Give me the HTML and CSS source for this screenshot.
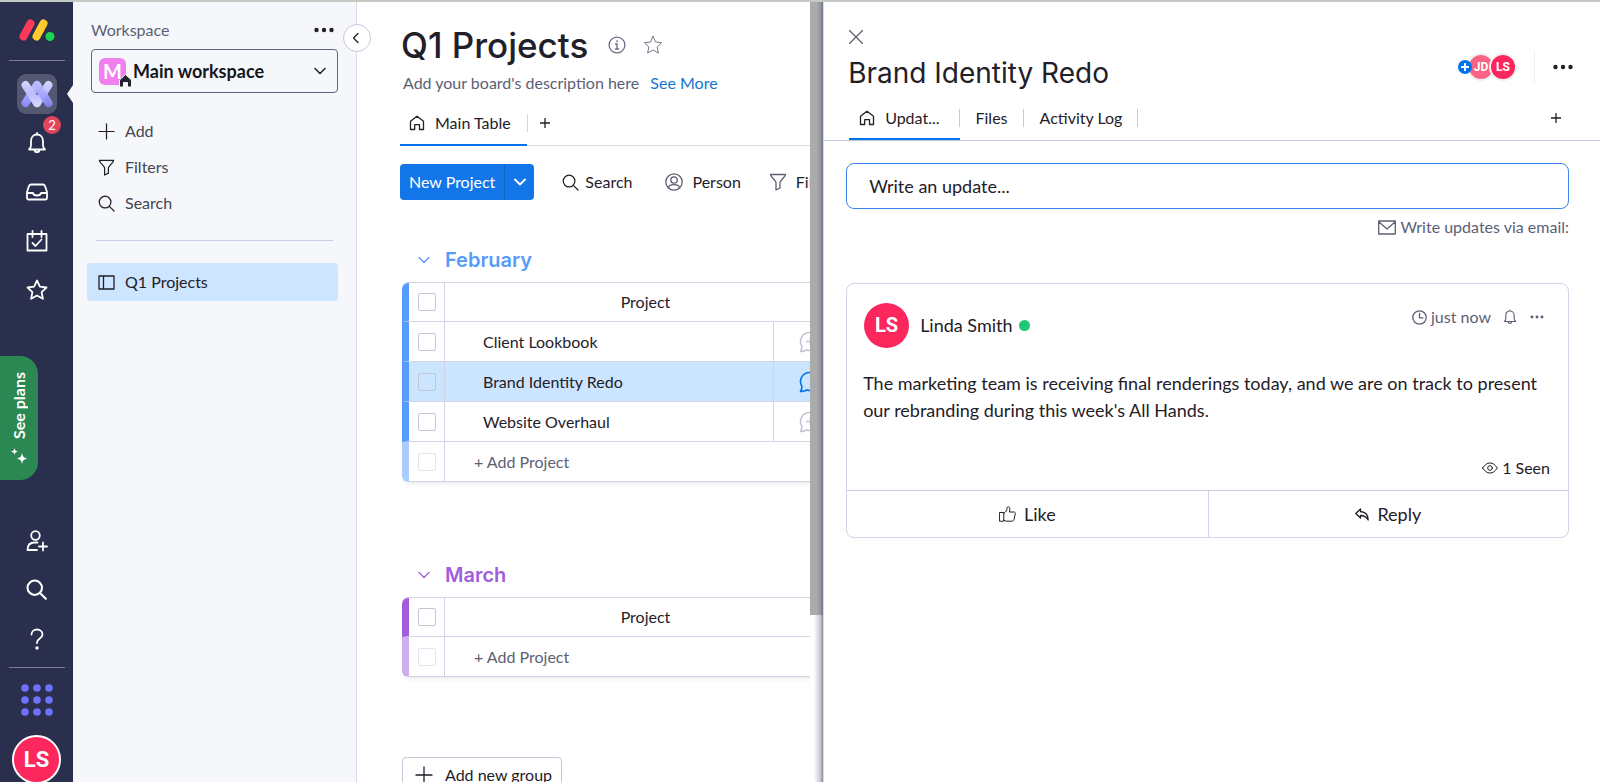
FILE: index.html
```html
<!DOCTYPE html>
<html lang="en">
<head>
    <meta charset="UTF-8">
    <meta name="viewport" content="width=device-width, initial-scale=1.0">
    <title>Q1 Projects</title>
    <link rel="stylesheet" href="styles.css">
</head>
<body>

    <!-- Shared icons -->
    <svg class="icon-defs" aria-hidden="true">
        <defs>
            <linearGradient id="grad-violet" x1="0" y1="0" x2="0" y2="28" gradientUnits="userSpaceOnUse"><stop offset="0.2" stop-color="#b9bbff"/><stop offset="1" stop-color="#8385fb"/></linearGradient>
            <linearGradient id="grad-light" x1="0" y1="0" x2="0" y2="28" gradientUnits="userSpaceOnUse"><stop offset="0" stop-color="#d6d8ff"/><stop offset="0.5" stop-color="#b9bbfd"/><stop offset="1" stop-color="#dcddff"/></linearGradient>
        </defs>
        <symbol id="icon-home" viewBox="0 0 16 16"><path d="M1.500 6.300 8 1.200l6.500 5.100v8.200h-4V9.600H5.700v4.900H1.500z"/></symbol>
        <symbol id="icon-search" viewBox="0 0 18 18"><circle cx="7.500" cy="7.500" r="6.200"/><path d="m12 12 5 5"/></symbol>
        <symbol id="icon-filter" viewBox="0 0 18 18"><path d="M1.500 1.500h15c0 2-5.500 6.500-5.500 8v5.500l-4 2v-7.500c0-1.500-5.500-6-5.500-8z"/></symbol>
        <symbol id="icon-plus" viewBox="0 0 18 18"><path d="M9 1v16M1 9h16"/></symbol>
        <symbol id="icon-chevron" viewBox="0 0 12 12"><path d="m1 3.500 5 5 5-5"/></symbol>
        <symbol id="icon-dots" viewBox="0 0 20 6"><circle cx="2.500" cy="3" r="2.200"/><circle cx="10" cy="3" r="2.200"/><circle cx="17.500" cy="3" r="2.200"/></symbol>
        <symbol id="icon-bell" viewBox="0 0 20 22"><path d="M10 1v1.500M2 17.500h16c-1.500-1.200-2-2.500-2-4.500V9c0-4-2.500-6.500-6-6.500S4 5 4 9v4c0 2-.5 3.300-2 4.500zM7.500 18c.3 1.500 1.200 2.200 2.500 2.200s2.200-.7 2.500-2.200"/></symbol>
        <symbol id="icon-star" viewBox="0 0 22 22"><path d="m11 1.500 2.900 6.200 6.600.8-4.900 4.600 1.300 6.700L11 16.500l-5.900 3.300 1.300-6.700-4.900-4.600 6.600-.8z"/></symbol>
        <symbol id="icon-bubble" viewBox="0 0 22 22"><path d="M11.500 1.500a9 9 0 1 1-3.800 17.200C6.500 20 5.500 20.300 4.500 19.800c-1 .7-2 .9-3 .7 1-1.500 1.500-3 1.300-5.500A9 9 0 0 1 11.500 1.500z"/></symbol>
    </svg>

    <div class="app">

        <!-- Main navigation rail -->
        <nav class="rail" aria-label="Main">
            <a href="#" class="rail-logo" aria-label="Home">
                <svg width="36" height="24" viewBox="0 0 36 24">
                    <path d="M4.500 18.500 11.500 5.500" stroke="#fb3958" stroke-width="8" stroke-linecap="round"/>
                    <path d="M17.500 18.500 24.500 5.500" stroke="#ffcb2f" stroke-width="8" stroke-linecap="round"/>
                    <circle cx="31" cy="18.500" r="4.500" fill="#1fd353"/>
                </svg>
            </a>
            <hr class="rail-line">
            <a href="#" class="rail-item" aria-label="Work management">
                <span class="rail-active">
                    <svg width="32" height="28" viewBox="0 0 32 28" stroke-width="8" stroke-linecap="round">
                        <path d="M27.500 5 16 23" stroke="url(#grad-light)"/>
                        <path d="M16 5 4.500 23" stroke="url(#grad-violet)"/>
                        <path d="m4.500 5 11.500 18" stroke="url(#grad-light)"/>
                        <path d="m16 5 11.500 18" stroke="url(#grad-violet)" opacity=".9"/>
                    </svg>
                </span>
            </a>
            <a href="#" class="rail-item" aria-label="Notifications">
                <svg class="icon" width="20" height="22"><use href="#icon-bell"/></svg>
                <span class="rail-badge">2</span>
            </a>
            <a href="#" class="rail-item" aria-label="Inbox">
                <svg class="icon" width="22" height="18" viewBox="0 0 22 18"><path d="M5 1.500h12c1 0 1.600.5 2 1.500l2 6v6c0 1-.6 1.500-1.500 1.500h-17C1.600 16.500 1 16 1 15V9l2-6c.4-1 1-1.500 2-1.500zM1.500 10H7c.4 2 1.500 2.500 4 2.500s3.600-.5 4-2.500h5.500"/></svg>
            </a>
            <a href="#" class="rail-item" aria-label="My work">
                <svg class="icon" width="22" height="22" viewBox="0 0 22 22"><path d="M1.500 4h19v16.500h-19zM6.500 1v6M15.500 1v6M6.500 13l3 3 6-6.500"/></svg>
            </a>
            <a href="#" class="rail-item" aria-label="Favorites">
                <svg class="icon" width="22" height="22"><use href="#icon-star"/></svg>
            </a>

            <div class="rail-bottom">
                <a href="#" class="rail-item" aria-label="Invite members">
                    <svg class="icon" width="22" height="22" viewBox="0 0 22 22"><circle cx="9.500" cy="5.500" r="4.300"/><path d="M11 20H1.500c0-5 3-7.500 7-7.500h3M17 12.500v8M13 16.500h8"/></svg>
                </a>
                <button type="button" class="rail-item" aria-label="Search">
                    <svg class="icon" width="21" height="21"><use href="#icon-search"/></svg>
                </button>
                <a href="#" class="rail-item" aria-label="Help">
                    <svg class="icon" width="14" height="22" viewBox="0 0 14 22"><path d="M1.500 6.500C1.500 3.500 4 1.500 7 1.500s5.500 2 5.500 5c0 4-5.500 4-5.500 8V15"/><circle cx="7" cy="20" r=".8"/></svg>
                </a>
                <hr class="rail-line rail-line-bottom">
                <button type="button" class="rail-apps" aria-label="Apps">
                    <svg width="32" height="32" viewBox="0 0 32 32" fill="#6f72ff">
                        <circle cx="4" cy="4" r="3.800"/><circle cx="16" cy="4" r="3.800"/><circle cx="28" cy="4" r="3.800"/>
                        <circle cx="4" cy="16" r="3.800"/><circle cx="16" cy="16" r="3.800"/><circle cx="28" cy="16" r="3.800"/>
                        <circle cx="4" cy="28" r="3.800"/><circle cx="16" cy="28" r="3.800"/><circle cx="28" cy="28" r="3.800"/>
                    </svg>
                </button>
                <button type="button" class="avatar rail-avatar">LS</button>
            </div>

            <a href="#" class="see-plans">
                <svg width="17" height="16" viewBox="0 0 17 16" fill="#fff"><path d="M11 5c1 4 1.500 4.500 5.500 5.500-4 1-4.500 1.500-5.500 5.500-1-4-1.500-4.500-5.500-5.500 4-1 4.500-1.500 5.500-5.500zM3.500 0C4.100 2.500 4.500 2.900 7 3.500 4.500 4.100 4.100 4.500 3.500 7 2.900 4.500 2.500 4.100 0 3.500 2.500 2.900 2.900 2.500 3.500 0z"/></svg>
                <span class="see-plans-text">See plans</span>
            </a>
        </nav>

        <!-- Workspace sidebar -->
        <aside class="sidebar">
            <div class="sidebar-head">
                <label for="workspace">Workspace</label>
                <button type="button" aria-label="Workspace options"><svg class="dots" width="20" height="6"><use href="#icon-dots"/></svg></button>
            </div>
            <div class="workspace-box">
                <span class="workspace-icon">M
                    <svg class="workspace-home" width="13" height="13" viewBox="0 0 13 13"><path d="M6.500.5 12.500 6v7H8.500V8.500h-4V13H.5V6z" fill="#23252e" stroke="#f6f7fb"/></svg>
                </span>
                <select id="workspace" class="workspace-select">
                    <option>Main workspace</option>
                </select>
                <svg class="icon workspace-arrow" width="12" height="12"><use href="#icon-chevron"/></svg>
            </div>
            <div class="sidebar-menu">
                <button type="button"><svg class="icon" width="17" height="17"><use href="#icon-plus"/></svg>Add</button>
                <button type="button"><svg class="icon" width="17" height="17"><use href="#icon-filter"/></svg>Filters</button>
                <button type="button"><svg class="icon" width="17" height="17"><use href="#icon-search"/></svg>Search</button>
            </div>
            <hr class="sidebar-line">
            <a href="#" class="board-link">
                <svg class="icon" width="17" height="15" viewBox="0 0 17 15"><path d="M1 1h15v13H1zM5.500 1v13"/></svg>Q1 Projects
            </a>
            <button type="button" class="sidebar-toggle" aria-label="Collapse sidebar">
                <svg class="icon" width="8" height="12" viewBox="0 0 8 12"><path d="M6 1.500 1.500 6 6 10.500"/></svg>
            </button>
        </aside>

        <!-- Board -->
        <main class="board">
            <div class="board-content">
                <div class="board-title">
                    <h1>Q1 Projects</h1>
                    <button type="button" aria-label="Board info">
                        <svg class="icon" width="18" height="18" viewBox="0 0 18 18"><circle cx="9" cy="9" r="7.900"/><path d="M9 8v5M7.500 8H9M7.500 13h3M9 4.700v1"/></svg>
                    </button>
                    <button type="button" aria-label="Add to favorites">
                        <svg class="icon thin" width="20" height="20"><use href="#icon-star"/></svg>
                    </button>
                </div>
                <p class="board-description">Add your board's description here <a href="#">See More</a></p>

                <div class="board-tabs">
                    <a href="#" class="board-tab"><svg class="icon" width="16" height="16"><use href="#icon-home"/></svg>Main Table</a>
                    <button type="button" class="tab-add" aria-label="Add view"><svg class="icon" width="10" height="10" viewBox="0 0 10 10"><path d="M5 0v10M0 5h10"/></svg></button>
                </div>

                <div class="toolbar">
                    <div class="new-project">
                        <button type="button" class="new-project-main">New Project</button>
                        <button type="button" class="new-project-more" aria-label="More options"><svg class="icon" width="12" height="12"><use href="#icon-chevron"/></svg></button>
                    </div>
                    <button type="button" class="tool"><svg class="icon" width="17" height="17"><use href="#icon-search"/></svg>Search</button>
                    <button type="button" class="tool tool-person">
                        <svg class="icon" width="18" height="18" viewBox="0 0 18 18"><circle cx="9" cy="9" r="8.200"/><circle cx="9" cy="7" r="3.200"/><path d="M3.500 15c0-2.500 2.500-3.300 5.500-3.300s5.500.8 5.500 3.300"/></svg>Person
                    </button>
                    <button type="button" class="tool tool-filter"><svg class="icon" width="18" height="18"><use href="#icon-filter"/></svg>Filter</button>
                </div>

                <section class="group group-blue">
                    <h2><svg class="icon" width="12" height="12"><use href="#icon-chevron"/></svg>February</h2>
                    <table class="group-table">
                        <colgroup>
                            <col class="check-col">
                            <col>
                            <col class="chat-col">
                        </colgroup>
                        <thead>
                            <tr>
                                <td class="check-cell"><input type="checkbox" aria-label="Select all in February"></td>
                                <th colspan="2">Project</th>
                            </tr>
                        </thead>
                        <tbody>
                            <tr>
                                <td class="check-cell"><input type="checkbox" aria-label="Select Client Lookbook"></td>
                                <td class="name-cell">Client Lookbook</td>
                                <td class="chat-cell"><button type="button" aria-label="Start conversation"><svg class="icon" width="22" height="22" viewBox="0 0 22 22"><use href="#icon-bubble"/><path d="M7.500 10.500h8M11.500 6.500v8"/></svg></button></td>
                            </tr>
                            <tr class="selected">
                                <td class="check-cell"><input type="checkbox" aria-label="Select Brand Identity Redo"></td>
                                <td class="name-cell">Brand Identity Redo</td>
                                <td class="chat-cell"><button type="button" aria-label="Open conversation"><svg class="icon" width="22" height="22"><use href="#icon-bubble"/></svg></button></td>
                            </tr>
                            <tr>
                                <td class="check-cell"><input type="checkbox" aria-label="Select Website Overhaul"></td>
                                <td class="name-cell">Website Overhaul</td>
                                <td class="chat-cell"><button type="button" aria-label="Start conversation"><svg class="icon" width="22" height="22" viewBox="0 0 22 22"><use href="#icon-bubble"/><path d="M7.500 10.500h8M11.500 6.500v8"/></svg></button></td>
                            </tr>
                            <tr class="add-row">
                                <td class="check-cell"><input type="checkbox" disabled aria-label="Select new project"></td>
                                <td colspan="2"><button type="button">+ Add Project</button></td>
                            </tr>
                        </tbody>
                    </table>
                </section>

                <section class="group group-purple">
                    <h2><svg class="icon" width="12" height="12"><use href="#icon-chevron"/></svg>March</h2>
                    <table class="group-table">
                        <colgroup>
                            <col class="check-col">
                            <col>
                            <col class="chat-col">
                        </colgroup>
                        <thead>
                            <tr>
                                <td class="check-cell"><input type="checkbox" aria-label="Select all in March"></td>
                                <th colspan="2">Project</th>
                            </tr>
                        </thead>
                        <tbody>
                            <tr class="add-row">
                                <td class="check-cell"><input type="checkbox" disabled aria-label="Select new project"></td>
                                <td colspan="2"><button type="button">+ Add Project</button></td>
                            </tr>
                        </tbody>
                    </table>
                </section>

                <button type="button" class="add-group"><svg class="icon" width="18" height="18"><use href="#icon-plus"/></svg>Add new group</button>
            </div>
            <div class="board-scroll"><div class="board-thumb"></div></div>
        </main>

        <!-- Item panel -->
        <section class="panel">
            <header class="panel-head">
                <button type="button" class="panel-close" aria-label="Close"><svg class="icon" width="14" height="14" viewBox="0 0 14 14"><path d="m.5.5 13 13M13.500.5l-13 13"/></svg></button>
                <div class="panel-title">
                    <h2>Brand Identity Redo</h2>
                    <div class="panel-people">
                        <button type="button" class="person-add" aria-label="Add subscriber"><svg width="14" height="14" viewBox="0 0 14 14"><circle cx="7" cy="7" r="7" fill="#0073ea"/><path d="M7 3v8M3 7h8" stroke="#fff" stroke-width="2"/></svg></button>
                        <span class="avatar person person-faded">JD</span>
                        <span class="avatar person">LS</span>
                    </div>
                    <button type="button" class="panel-menu" aria-label="Item menu"><svg class="dots" width="20" height="6"><use href="#icon-dots"/></svg></button>
                </div>
                <div class="panel-tabs">
                    <a href="#" class="panel-tab current"><svg class="icon" width="16" height="16"><use href="#icon-home"/></svg>Updat...</a>
                    <a href="#" class="panel-tab">Files</a>
                    <a href="#" class="panel-tab">Activity Log</a>
                    <button type="button" class="panel-tab-add" aria-label="Add view"><svg class="icon" width="10" height="10" viewBox="0 0 10 10"><path d="M5 0v10M0 5h10"/></svg></button>
                </div>
            </header>

            <div class="panel-body">
                <input type="text" class="update-input" placeholder="Write an update..." aria-label="Write an update">
                <a href="#" class="email-link"><svg class="icon" width="18" height="15" viewBox="0 0 18 15"><path d="M.7 1h16.600v13H.7zM1 2l8 7 8-7"/></svg>Write updates via email:</a>

                <article class="post">
                    <div class="post-head">
                        <span class="avatar post-avatar">LS</span>
                        <a href="#" class="post-author">Linda Smith</a>
                        <span class="online"></span>
                        <div class="post-meta">
                            <svg class="icon" width="15" height="15" viewBox="0 0 15 15"><circle cx="7.500" cy="7.500" r="6.700"/><path d="M7.500 3.500v4.300h3.500"/></svg>
                            <span>just now</span>
                            <button type="button" aria-label="Remind me"><svg class="icon meta-bell" width="14" height="16"><use href="#icon-bell"/></svg></button>
                            <button type="button" aria-label="Update menu"><svg class="dots" width="14" height="4"><use href="#icon-dots"/></svg></button>
                        </div>
                    </div>
                    <p class="post-text">The marketing team is receiving final renderings today, and we are on track to present our rebranding during this week's All Hands.</p>
                    <div class="post-seen">
                        <svg class="icon thin" width="16" height="12" viewBox="0 0 16 12"><path d="M.7 6C3 2.500 5.300 1 8 1s5 1.500 7.300 5C13 9.500 10.700 11 8 11S3 9.500.7 6z"/><circle cx="8" cy="6" r="2.300"/></svg>1 Seen
                    </div>
                    <div class="post-actions">
                        <button type="button"><svg class="icon thin" width="17" height="16" viewBox="0 0 17 16"><path d="M.8 6.500h4v8.700h-4zM4.800 7.500C7 6 8 4 8 2.500 8 1 8.600.6 9.500.8c1.600.4 1.700 2.700.8 5.200h4.500c1.300 0 1.800 1 1.400 2.200L15 13.500c-.4 1.300-1 1.700-2.200 1.700H7l-2.200-1"/></svg>Like</button>
                        <button type="button"><svg class="icon" width="14" height="13" viewBox="0 0 14 13"><path d="M5.500 1 .8 5.500l4.700 4.500V7.500c3 0 5.500.7 7.700 4.500 0-5-3-8-7.700-8.500z"/></svg>Reply</button>
                    </div>
                </article>
            </div>
        </section>
    </div>

</body>
</html>
```

FILE: styles.css
```css
* {
    box-sizing: border-box;
}

body {
    margin: 0;
    height: 100vh;
    overflow: hidden;
    border-top: 2px solid #c6cac4;
    background: #fff;
    color: #1f2028;
    font-family: 'Lato', 'Open Sans', sans-serif;
    font-size: 16px;
    line-height: 24px;
}

button {
    display: flex;
    align-items: center;
    padding: 0;
    border: none;
    background: none;
    color: inherit;
    font: inherit;
    cursor: pointer;
}

a {
    color: inherit;
    text-decoration: none;
}

h1,
h2,
p {
    margin: 0;
}

h1,
h2 {
    font-family: 'Inter', sans-serif;
    font-weight: 500;
}

hr {
    margin: 0;
    border: none;
}

.icon-defs {
    position: absolute;
    width: 0;
    height: 0;
}

.icon {
    flex-shrink: 0;
    fill: none;
    stroke: currentColor;
    stroke-width: 1.3;
    stroke-linejoin: round;
    stroke-linecap: round;
}

.icon.thin {
    stroke-width: 1;
}

.dots {
    display: block;
    fill: currentColor;
}

.avatar {
    display: flex;
    align-items: center;
    justify-content: center;
    border-radius: 50%;
    background: #fb275d;
    color: #fff;
    font-family: 'Roboto', sans-serif;
    font-weight: 700;
}

.app {
    display: grid;
    grid-template-columns: 73px 284px minmax(0, 3fr) minmax(0, 5fr);
    height: 100%;
}

/* Navigation rail */
.rail {
    position: relative;
    display: flex;
    flex-direction: column;
    align-items: center;
    min-height: 0;
    padding-top: 16px;
    background: #292f4c;
    color: #fff;
}

.rail-logo svg {
    display: block;
    fill: none;
}

.rail-line {
    width: 56px;
    height: 1px;
    margin: 18px 0 8px;
    background: #7b7f92;
}

.rail-line-bottom {
    margin: 4px 0 16px;
}

.rail-item {
    position: relative;
    display: flex;
    align-items: center;
    justify-content: center;
    width: 100%;
    height: 49px;
}

.rail-item .icon {
    stroke-width: 1.8;
}

.rail-active {
    display: flex;
    align-items: center;
    justify-content: center;
    width: 40px;
    height: 40px;
    border-radius: 9px;
    background: #545971;
}

.rail-active svg {
    fill: none;
}

/* Notch that points from the sidebar to the active item */
.rail-item:has(.rail-active)::after {
    content: "";
    position: absolute;
    right: 0;
    border: solid transparent;
    border-width: 9px 6px 9px 0;
    border-right-color: #f6f7fb;
}

.rail-badge {
    position: absolute;
    top: -2px;
    right: 12px;
    width: 18px;
    height: 18px;
    border-radius: 50%;
    background: #e2445c;
    font-size: 13px;
    line-height: 18px;
    text-align: center;
}

.rail-bottom {
    display: flex;
    flex-direction: column;
    align-items: center;
    width: 100%;
    margin: auto 0 -2px;
}

.rail-avatar {
    width: 49px;
    height: 49px;
    margin-top: 19px;
    border: 2px solid #fff;
    font-size: 22px;
}

.see-plans {
    position: absolute;
    top: 354px;
    left: 0;
    display: flex;
    flex-direction: column-reverse;
    align-items: center;
    justify-content: center;
    gap: 10px;
    width: 38px;
    height: 124px;
    border-radius: 0 18px 18px 0;
    background: #2b8853;
}

.see-plans-text {
    writing-mode: vertical-rl;
    transform: rotate(180deg);
    font-weight: 700;
    line-height: 20px;
}

/* Sidebar */
.sidebar {
    position: relative;
    padding: 16px 18px 0;
    border-right: 1px solid #d9dbe8;
    background: #f6f7fb;
}

.sidebar-head {
    display: flex;
    align-items: center;
    justify-content: space-between;
    height: 24px;
    padding-right: 4px;
    color: #5c5f75;
}

.sidebar-head button {
    color: #1f2028;
}

.workspace-box {
    position: relative;
    display: flex;
    align-items: center;
    height: 44px;
    margin-top: 7px;
    padding-left: 7px;
    border: 1px solid #62657a;
    border-radius: 4px;
}

.workspace-icon {
    position: relative;
    flex-shrink: 0;
    width: 27px;
    height: 27px;
    border-radius: 6px;
    background: #f080ee;
    color: #fff;
    font-size: 20px;
    font-weight: 700;
    line-height: 27px;
    text-align: center;
}

.workspace-home {
    position: absolute;
    right: -6px;
    bottom: -2px;
}

.workspace-select {
    flex: 1;
    height: 100%;
    padding: 0 32px 0 7px;
    border: none;
    outline: none;
    appearance: none;
    background: none;
    color: #15161c;
    font: inherit;
    font-size: 18px;
    font-weight: 700;
}

.workspace-arrow {
    position: absolute;
    right: 11px;
    pointer-events: none;
    stroke-width: 1.5;
}

.sidebar-menu {
    margin-top: 20px;
}

.sidebar-menu button {
    gap: 10px;
    width: 100%;
    height: 36px;
    padding-left: 7px;
    color: #43454f;
}

.sidebar-menu .icon {
    color: #1f2028;
}

.sidebar-line {
    height: 1px;
    margin: 19px 5px 22px;
    background: #c8cde3;
}

.board-link {
    display: flex;
    align-items: center;
    gap: 10px;
    height: 38px;
    margin-left: -4px;
    padding-left: 11px;
    border-radius: 4px;
    background: #cde5fe;
}

.sidebar-toggle {
    position: absolute;
    top: 22px;
    right: -15px;
    z-index: 1;
    justify-content: center;
    width: 28px;
    height: 28px;
    padding-right: 3px;
    border: 1px solid #c5c9dc;
    border-radius: 50%;
    background: #fff;
}

/* Board */
.board {
    display: flex;
    min-height: 0;
    overflow: hidden;
}

.board-content {
    flex: 1;
    min-width: 0;
    padding: 21px 0 0 43px;
    overflow: hidden;
    white-space: nowrap;
}

.board-scroll {
    flex: 0 0 13px;
    background: linear-gradient(to right, #fff 30%, #c5c7d0 80%, #85889c);
}

.board-thumb {
    height: 613px;
    max-height: 79%;
    background: linear-gradient(to right, #ababab 50%, #9698a0 80%, #6f7387);
}

.board-title {
    display: flex;
    align-items: center;
    height: 44px;
    padding-left: 1px;
    color: #676a80;
}

.board-title h1 {
    margin-right: 20px;
    color: #1f2028;
    font-size: 35px;
    line-height: 44px;
}

.board-title button + button {
    margin-left: 17px;
}

.board-description {
    margin-top: 4px;
    padding-left: 3px;
    color: #5c5f75;
}

.board-description a {
    margin-left: 7px;
    color: #1277d0;
}

.board-tabs {
    display: flex;
    height: 48px;
    margin-top: 3px;
    border-bottom: 1px solid #d9dbe8;
}

.board-tab {
    display: flex;
    align-items: center;
    gap: 10px;
    height: 48px;
    padding: 4px 16px 0 9px;
    border-bottom: 2px solid #0073ea;
}

.tab-add {
    height: 18px;
    margin-top: 16px;
    padding-left: 12px;
    border-left: 1px solid #d0d4e4;
}

.toolbar {
    display: flex;
    align-items: center;
    height: 36px;
    margin-top: 18px;
}

.new-project {
    display: flex;
    height: 36px;
    border-radius: 4px;
    background: #1376e8;
    color: #fff;
}

.new-project-main {
    padding: 0 9px;
}

.new-project-more {
    justify-content: center;
    width: 30px;
    border-left: 1px solid #1065c8;
}

.new-project-more .icon {
    stroke-width: 1.8;
}

.tool {
    gap: 6px;
    margin-left: 28px;
}

.tool-person,
.tool-filter {
    margin-left: 33px;
    gap: 9px;
}

.tool-person .icon,
.tool-filter .icon {
    color: #5c5f75;
}

.tool-filter {
    margin-left: 28px;
}

/* Groups */
.group {
    margin: 38px 0 71px 2px;
}

.group + .group {
    margin-top: 0;
}

.group h2 {
    display: flex;
    align-items: center;
    gap: 15px;
    height: 44px;
    padding-left: 16px;
    color: var(--group-color);
    font-size: 20px;
    font-weight: 600;
}

.group-blue {
    --group-color: #579bfc;
    --group-light: #abcdfd;
}

.group-purple {
    --group-color: #a25ddc;
    --group-light: #d0aeed;
}

.group-table {
    width: 444px;
    border-spacing: 0;
    table-layout: fixed;
    border-top: 1px solid #d0d4e4;
    border-radius: 6px;
    box-shadow: 0 4px 6px -4px rgba(0, 0, 0, 0.15);
}

.check-col {
    width: 43px;
}

.chat-col {
    width: 72px;
}

.group-table th,
.group-table td {
    height: 40px;
    padding: 0;
    border-bottom: 1px solid #d0d4e4;
    font-weight: 400;
}

.group-table thead th,
.group-table thead td {
    height: 39px;
}

.group-table .check-cell {
    padding: 0 8px 0 9px;
    border-left: 7px solid var(--group-color);
    border-right: 1px solid #d0d4e4;
    line-height: 0;
}

.group-table thead .check-cell {
    border-top-left-radius: 6px;
}

.group-table .add-row .check-cell {
    border-left-color: var(--group-light);
    border-bottom-left-radius: 6px;
}

.check-cell input {
    width: 18px;
    height: 18px;
    margin: 0;
    appearance: none;
    border: 1px solid #c3c6d4;
    border-radius: 2px;
}

.add-row .check-cell input {
    border-color: #e4e5ee;
}

.group-table .name-cell {
    padding-left: 38px;
    border-right: 1px solid #d0d4e4;
}

.chat-cell {
    color: #c3c6d4;
}

.chat-cell button {
    margin-left: 25px;
}

.chat-cell .icon {
    stroke-width: 1.6;
}

.selected {
    background: #cce5ff;
}

.selected .chat-cell {
    color: #0073ea;
}

.add-row button {
    margin-left: 29px;
    color: #5c5f75;
}

.add-group {
    gap: 12px;
    height: 36px;
    margin: 80px 0 0 2px;
    padding: 0 9px 0 12px;
    border: 1px solid #c3c6d4;
    border-radius: 4px;
}

.group:has(+ .add-group) {
    margin-bottom: 0;
}

/* Item panel */
.panel {
    min-width: 0;
    border-left: 1px solid #d9dbe8;
    background: #fff;
}

.panel-head {
    padding-top: 28px;
    border-bottom: 1px solid #c5c9dc;
}

.panel-close {
    margin-left: 25px;
    color: #5f616b;
}

.panel-title {
    display: flex;
    align-items: center;
    height: 46px;
    padding: 0 27px 0 24px;
    margin-top: 6px;
}

.panel-title h2 {
    flex: 1;
    font-size: 28px;
    font-weight: 400;
    line-height: 46px;
}

.panel-people {
    display: flex;
    align-items: center;
    align-self: flex-start;
    height: 34px;
    margin-right: 17px;
}

.person-add {
    position: relative;
    z-index: 1;
    margin-right: -5px;
}

.person {
    position: relative;
    width: 28px;
    height: 28px;
    border: 2px solid #f0f0f3;
    font-size: 12px;
}

.person-faded {
    margin-right: -6px;
    background: #fa6484;
}

.panel-menu {
    align-self: flex-start;
    height: 34px;
    padding-left: 18px;
    border-left: 1px solid #eeeff4;
}

.panel-tabs {
    display: flex;
    align-items: center;
    height: 44px;
    padding: 0 39px 0 25px;
}

.panel-tab {
    position: relative;
    display: flex;
    align-items: center;
    height: 44px;
    padding: 0 16px;
}

.panel-tab::after {
    content: "";
    position: absolute;
    top: 13px;
    right: 0;
    width: 1px;
    height: 18px;
    background: #c5c9dc;
}

.panel-tab.current {
    gap: 10px;
    padding: 2px 20px 0 10px;
    border-bottom: 2px solid #0073ea;
}

.panel-tab-add {
    margin-left: auto;
}

.panel-body {
    padding: 22px 31px 0 22px;
}

.update-input {
    display: block;
    width: 100%;
    height: 46px;
    padding: 0 22px;
    border: 1px solid #3c86ec;
    border-radius: 8px;
    outline: none;
    background: #fff;
    color: #1f2028;
    font: inherit;
    font-size: 18px;
}

.update-input::placeholder {
    color: #1f2028;
    opacity: 1;
}

.email-link {
    display: flex;
    align-items: center;
    justify-content: flex-end;
    gap: 4px;
    margin-top: 6px;
    color: #5c5f75;
}

.post {
    margin-top: 44px;
    border: 1px solid #d0d4e4;
    border-radius: 8px;
    font-size: 18px;
}

.post-head {
    display: flex;
    align-items: center;
    height: 46px;
    margin: 18px 24px 0 17px;
}

.post-avatar {
    width: 45px;
    height: 45px;
    font-size: 20px;
}

.post-author {
    margin-left: 11px;
}

.online {
    width: 11px;
    height: 11px;
    margin-left: 6px;
    border-radius: 50%;
    background: #1ec677;
}

.post-meta {
    display: flex;
    align-items: center;
    align-self: flex-start;
    height: 30px;
    margin-left: auto;
    color: #5c5f75;
    font-size: 16px;
}

.post-meta span {
    margin: 0 12px 0 4px;
}

.post-meta button + button {
    margin-left: 13px;
}

.meta-bell {
    stroke-width: 1.6;
}

.post-text {
    margin: 22px 20px 0 16px;
    line-height: 27px;
}

.post-seen {
    display: flex;
    align-items: center;
    justify-content: flex-end;
    gap: 4px;
    margin: 32px 18px 10px 0;
    font-size: 16px;
}

.post-actions {
    display: grid;
    grid-template-columns: 1fr 1fr;
    border-top: 1px solid #c8cde3;
}

.post-actions button {
    justify-content: center;
    gap: 8px;
    height: 46px;
}

.post-actions button + button {
    border-left: 1px solid #d0d4e4;
}
```
